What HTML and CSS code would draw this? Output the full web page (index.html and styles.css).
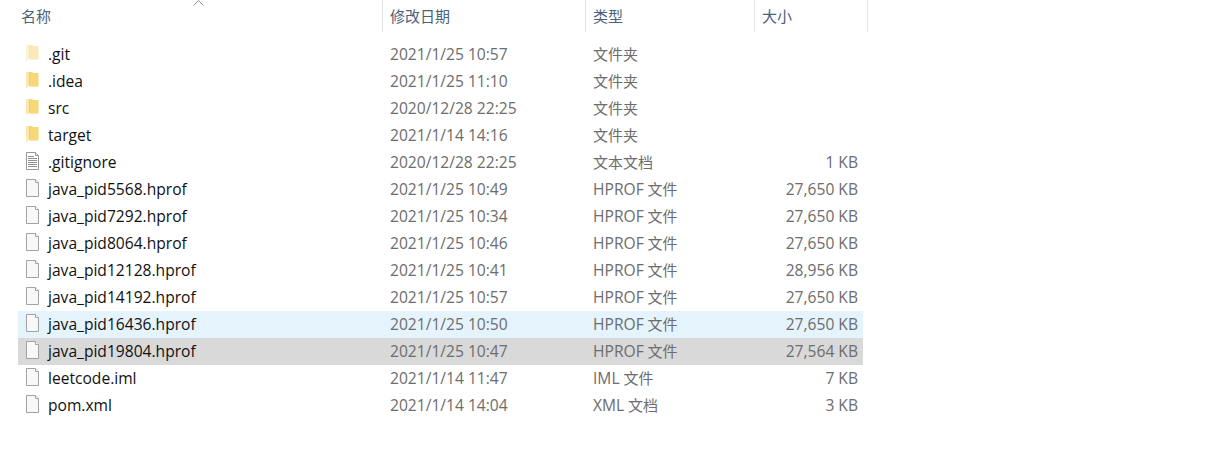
FILE: index.html
```html
<!DOCTYPE html>
<html lang="zh-CN">
<head>
  <meta charset="UTF-8" />
  <title>leetcode</title>
  <link rel="stylesheet" href="styles.css">
</head>
<body>
  <svg class="defs" width="0" height="0">
    <symbol id="folder" viewBox="0 0 16 18">
      <path d="M3 1h4l1 1h5.500v13h-10.500z" fill="#f7d778"/>
      <path d="M1 1h3.500v13l-3.500 3.500z" fill="#fbe8ac"/>
      <path d="M4.500 1.500v12.500" stroke="#efcb66" fill="none"/>
      <path d="M4.500 15h9v.5h-9z" fill="#efcb66"/>
    </symbol>
    <symbol id="file" viewBox="0 0 16 18">
      <path d="M1.500 .5h9l3 3v14h-12z" fill="#f8f8f8" stroke="#a3a3a3"/>
      <path d="M10.500 .5v3h3" fill="#fff" stroke="#a3a3a3"/>
    </symbol>
    <symbol id="text" viewBox="0 0 16 18">
      <path d="M1.500 .5h9l3 3v14h-12z" fill="#fff" stroke="#989898"/>
      <path d="M10.500 .5v3h3" fill="#eee" stroke="#989898"/>
      <path d="M3 4.500h6M3 6.500h9M3 8.500h9M3 10.500h9M3 12.500h9M3 14.500h9" stroke="#8f8f8f"/>
    </symbol>
  </svg>

  <div class="header">
    <div class="head-cell name-head">名称
      <svg class="sort-arrow" width="11" height="6" viewBox="0 0 11 6"><path d="M.5 5.500l5-5 5 5" fill="none" stroke="#8a8f96"/></svg>
    </div>
    <div class="head-cell">修改日期</div>
    <div class="head-cell">类型</div>
    <div class="head-cell">大小</div>
  </div>

  <div class="list">
    <div class="row"><div class="name"><svg class="icon faded"><use href="#folder"/></svg>.git</div><div>2021/1/25 10:57</div><div class="type">文件夹</div><div class="size"></div></div>
    <div class="row"><div class="name"><svg class="icon"><use href="#folder"/></svg>.idea</div><div>2021/1/25 11:10</div><div class="type">文件夹</div><div class="size"></div></div>
    <div class="row"><div class="name"><svg class="icon"><use href="#folder"/></svg>src</div><div>2020/12/28 22:25</div><div class="type">文件夹</div><div class="size"></div></div>
    <div class="row"><div class="name"><svg class="icon"><use href="#folder"/></svg>target</div><div>2021/1/14 14:16</div><div class="type">文件夹</div><div class="size"></div></div>
    <div class="row"><div class="name"><svg class="icon"><use href="#text"/></svg>.gitignore</div><div>2020/12/28 22:25</div><div class="type">文本文档</div><div class="size">1 KB</div></div>
    <div class="row"><div class="name"><svg class="icon"><use href="#file"/></svg>java_pid5568.hprof</div><div>2021/1/25 10:49</div><div class="type"><span class="latin">HPROF</span> 文件</div><div class="size">27,650 KB</div></div>
    <div class="row"><div class="name"><svg class="icon"><use href="#file"/></svg>java_pid7292.hprof</div><div>2021/1/25 10:34</div><div class="type"><span class="latin">HPROF</span> 文件</div><div class="size">27,650 KB</div></div>
    <div class="row"><div class="name"><svg class="icon"><use href="#file"/></svg>java_pid8064.hprof</div><div>2021/1/25 10:46</div><div class="type"><span class="latin">HPROF</span> 文件</div><div class="size">27,650 KB</div></div>
    <div class="row"><div class="name"><svg class="icon"><use href="#file"/></svg>java_pid12128.hprof</div><div>2021/1/25 10:41</div><div class="type"><span class="latin">HPROF</span> 文件</div><div class="size">28,956 KB</div></div>
    <div class="row"><div class="name"><svg class="icon"><use href="#file"/></svg>java_pid14192.hprof</div><div>2021/1/25 10:57</div><div class="type"><span class="latin">HPROF</span> 文件</div><div class="size">27,650 KB</div></div>
    <div class="row hover"><div class="name"><svg class="icon"><use href="#file"/></svg>java_pid16436.hprof</div><div>2021/1/25 10:50</div><div class="type"><span class="latin">HPROF</span> 文件</div><div class="size">27,650 KB</div></div>
    <div class="row selected"><div class="name"><svg class="icon"><use href="#file"/></svg>java_pid19804.hprof</div><div>2021/1/25 10:47</div><div class="type"><span class="latin">HPROF</span> 文件</div><div class="size">27,564 KB</div></div>
    <div class="row"><div class="name"><svg class="icon"><use href="#file"/></svg>leetcode.iml</div><div>2021/1/14 11:47</div><div class="type"><span class="latin">IML</span> 文件</div><div class="size">7 KB</div></div>
    <div class="row"><div class="name"><svg class="icon"><use href="#file"/></svg>pom.xml</div><div>2021/1/14 14:04</div><div class="type"><span class="latin">XML</span> 文档</div><div class="size">3 KB</div></div>
  </div>
</body>
</html>
```

FILE: styles.css
```css
body {
  font-family: "Open Sans", "Noto Sans CJK SC", sans-serif;
  font-size: 15.6px;
  margin: 0;
  padding: 0;
  background: #fff;
  color: #6d6d6d;
  overflow: hidden;
}
.defs {
  display: block;
  height: 0;
}
.header {
  display: grid;
  grid-template-columns: 383px 203px 169px 113px;
  width: 868px;
  height: 32px;
  font-size: 15px;
}
.head-cell {
  position: relative;
  padding-left: 7px;
  line-height: 32px;
  color: #4c607a;
  border-right: 1px solid #e5e5e5;
}
.name-head {
  padding-left: 21px;
}
.sort-arrow {
  position: absolute;
  left: 193px;
  top: 0;
}
.list {
  margin: 9px 0 0 18px;
  width: 845px;
}
.row {
  display: grid;
  grid-template-columns: 365px 203px 169px 108px;
  height: 27px;
  line-height: 26px;
}
.row > div {
  padding-left: 7px;
  white-space: nowrap;
}
.row .name {
  display: flex;
  align-items: center;
  height: 26px;
  color: #111;
}
.row .size {
  padding-left: 0;
  padding-right: 5px;
  text-align: right;
}
.row .type {
  font-size: 15px;
}
.latin {
  font-size: 15.6px;
}
.hover {
  background: #e5f3fd;
}
.selected {
  background: #d9d9d9;
}
.icon {
  width: 16px;
  height: 18px;
  margin: 0 7px 2px 0;
  flex: none;
}
.faded {
  opacity: 0.5;
}
```
